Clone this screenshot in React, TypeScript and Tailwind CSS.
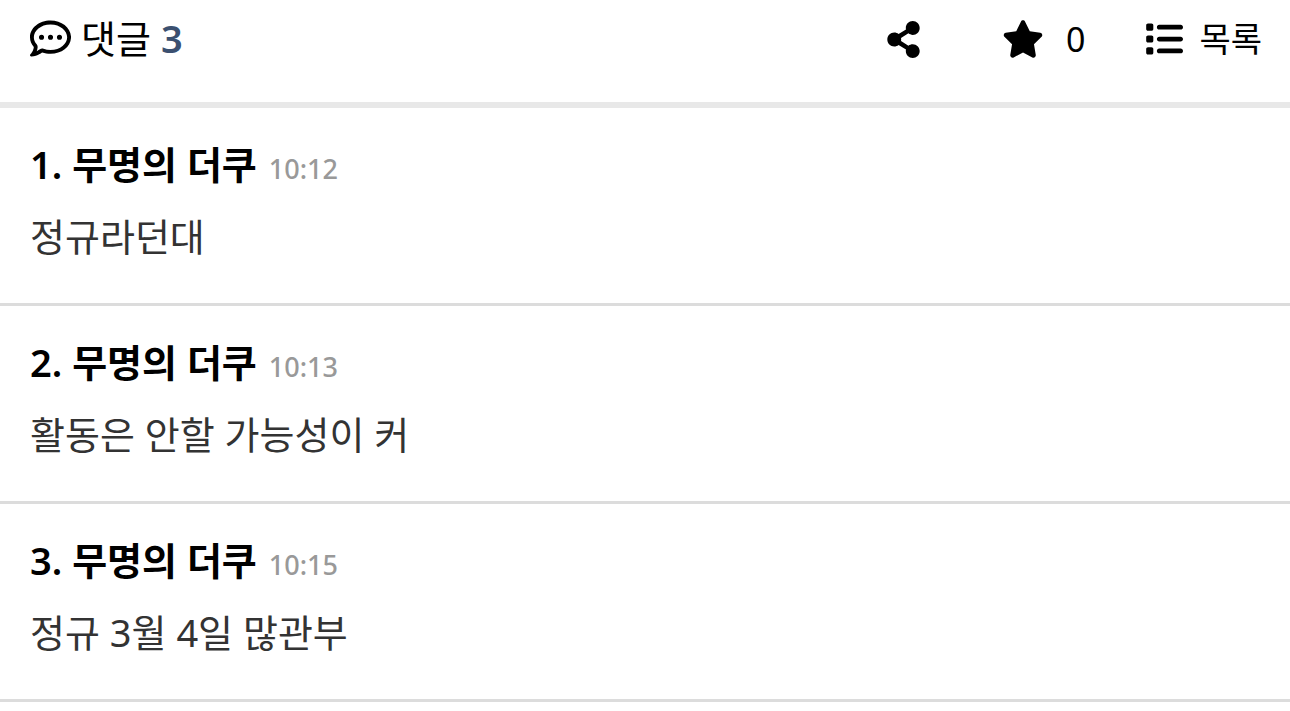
import { FaShareAlt } from 'react-icons/fa';
import { FaRegCommentDots, FaStar, FaList } from 'react-icons/fa6';

type Comment = {
  id: number;
  author: string;
  time: string;
  body: string;
};

const comments: Comment[] = [
  { id: 1, author: '무명의 더쿠', time: '10:12', body: '정규라던대' },
  { id: 2, author: '무명의 더쿠', time: '10:13', body: '활동은 안할 가능성이 커' },
  { id: 3, author: '무명의 더쿠', time: '10:15', body: '정규 3월 4일 많관부' },
];

export default function App() {
  return (
    <main className="bg-white text-black font-['Noto_Sans','Noto_Sans_CJK_KR',sans-serif]">
      <header className="flex items-start justify-between border-b-6 border-[#e8e8e8] px-7 pt-4 pb-10">
        <h2 className="flex items-center text-[38px] leading-[44px]">
          <FaRegCommentDots className="mr-2.5 ml-0.5 size-[41px]" />
          <span>댓글</span>
          <span className="ml-2.5 font-semibold text-[#3b5070]">3</span>
        </h2>
        <div className="flex items-center text-[34px] leading-[46px]">
          <button type="button" aria-label="공유" className="mr-20">
            <FaShareAlt className="size-[37px]" />
          </button>
          <button type="button" className="mr-[60px] flex items-center">
            <FaStar className="mr-[22px] size-[42px]" />
            <span>0</span>
          </button>
          <a href="#list" className="flex items-center">
            <FaList className="mr-4 size-[38px]" />
            <span>목록</span>
          </a>
        </div>
      </header>

      <ul>
        {comments.map((comment) => (
          <li key={comment.id} className="border-b-3 border-[#dcdcdc] px-[30px] pt-[31px] pb-10">
            <div className="flex items-baseline">
              <strong className="text-[38px] leading-[50px] font-semibold">{comment.id}. {comment.author}</strong>
              <time className="ml-3 text-[27px] leading-8 font-medium text-[#999]">{comment.time}</time>
            </div>
            <p className="mt-5 text-[38px] leading-[54px] text-[#333]">{comment.body}</p>
          </li>
        ))}
      </ul>
    </main>
  );
}
